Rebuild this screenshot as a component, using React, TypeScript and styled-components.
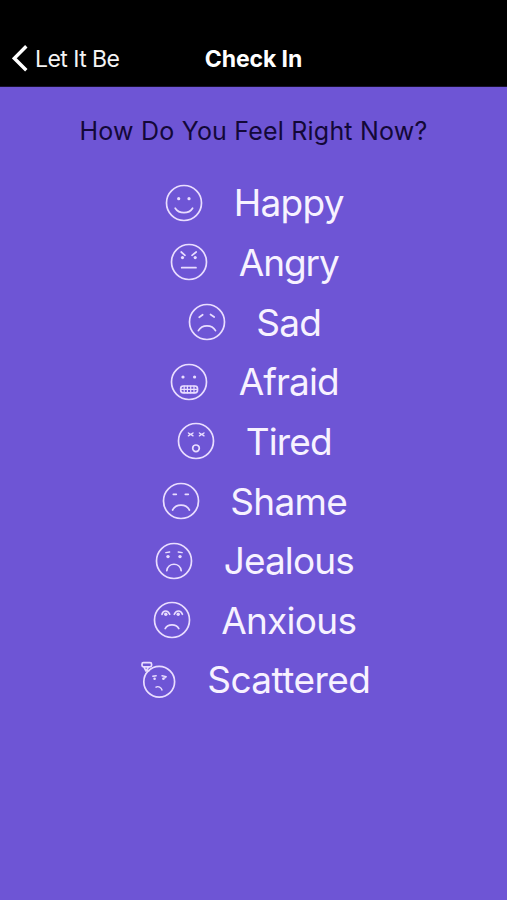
import React from "react";
import styled, { createGlobalStyle } from "styled-components";

const GlobalStyle = createGlobalStyle`
  * { box-sizing: border-box; }
  body { margin: 0; background: #6e55d5; }
`;

const Screen = styled.div`
  width: 100%;
  height: 900px;
  overflow: hidden;
  background: #6e55d5;
  font-family: Inter, "Liberation Sans", sans-serif;
  color: #f7f2ff;
`;

const NavBar = styled.header`
  height: 87px;
  padding: 31px 12px 0;
  display: grid;
  grid-template-columns: 1fr auto 1fr;
  align-items: center;
  background: #000;
  border-bottom: 1px solid #17112e;
`;

const BackButton = styled.button`
  display: flex;
  align-items: center;
  gap: 7px;
  padding: 0;
  border: 0;
  background: none;
  color: #f4f4f4;
  font: 400 23px/28px Inter, sans-serif;
  letter-spacing: -0.55px;
  white-space: nowrap;
`;

const NavTitle = styled.h1`
  margin: 0;
  color: #fff;
  font-size: 23px;
  line-height: 28px;
  font-weight: 700;
  letter-spacing: -0.1px;
`;

const Question = styled.h2`
  margin: 28px 0 0;
  height: 32px;
  text-align: center;
  color: #130838;
  font-size: 25px;
  line-height: 32px;
  font-weight: 400;
  letter-spacing: 0.2px;
  white-space: nowrap;
`;

const MoodList = styled.ul`
  list-style: none;
  margin: 26px 0 0;
  padding: 0 0 0 2px;
  display: grid;
  grid-auto-rows: 59.65px;
`;

const MoodRow = styled.li`
  display: flex;
  align-items: center;
  justify-content: center;
  gap: 30.5px;
`;

const Face = styled.svg`
  flex: none;
  width: 38px;
  height: 38px;
  overflow: visible;
  fill: none;
  stroke: #e9ddff;
  stroke-width: 1.7;
  stroke-linecap: round;
  stroke-linejoin: round;
`;

const Label = styled.span<{ $tracking: number }>`
  padding-top: 1px;
  font-size: 37px;
  line-height: 46px;
  letter-spacing: ${(p) => p.$tracking}px;
  white-space: nowrap;
`;

const Dot = ({ x, y, r = 1.6 }: { x: number; y: number; r?: number }) => (
  <circle cx={x} cy={y} r={r} fill="#e9ddff" stroke="none" />
);

const Head = () => <circle r="17.5" />;

const moods: { name: string; tracking: number; face: React.ReactNode }[] = [
  {
    name: "Happy",
    tracking: -0.7,
    face: <><Head /><Dot x={-5.3} y={-4.3} /><Dot x={5} y={-4.3} /><path d="M-8.8 5.2C-5 11.2 5 11.2 8.6 5.2" /></>,
  },
  {
    name: "Angry",
    tracking: -1.1,
    face: <><Head /><path d="M-7.8-10L-4-6.7M7.2-10L3-6.7M-7.3 5.7H7" /><Dot x={-6.5} y={-4.4} /><Dot x={6.2} y={-4.4} /></>,
  },
  {
    name: "Sad",
    tracking: -0.8,
    face: <><Head /><path d="M-7.8-4.7L-4.3-7.3M3.5-7.5L7.2-5M-8.6 8.7C-5 2.3 5 2.3 8.5 8.7" /></>,
  },
  {
    name: "Afraid",
    tracking: -0.9,
    face: <><Head /><Dot x={-6} y={-5} /><Dot x={5.6} y={-5} /><rect x="-8.3" y="4" width="16.8" height="6.8" rx="2.6" /><path strokeWidth="1.2" d="M-8 7.4H8M-4.8 4V10.8M-1.6 4V10.8M1.7 4V10.8M5 4V10.8" /></>,
  },
  {
    name: "Tired",
    tracking: -0.9,
    face: <><Head /><path strokeWidth="1.4" d="M-7.6-8L-5.5-6.6L-7.6-5.2M-3-8L-5.1-6.6L-3-5.2M3.4-8L5.5-6.6L3.4-5.2M8-8L5.9-6.6L8-5.2" /><circle cy="7.3" r="3.3" /></>,
  },
  {
    name: "Shame",
    tracking: -0.7,
    face: <><Head /><path d="M-7.7-6.7H-4.7M4.3-6.7H7.3M-8.4 9C-5 2.4 5 2.4 8.4 9" /></>,
  },
  {
    name: "Jealous",
    tracking: -0.9,
    face: <><Head /><path strokeWidth="1.3" d="M-8.2-8.4L-4.3-9M4.2-9L8.2-8.4" /><Dot x={-6} y={-4.4} r={1.7} /><Dot x={6} y={-4.4} r={1.7} /><path d="M-7.2 9.7C-6 1.1 6 1.1 7.2 9.7" /></>,
  },
  {
    name: "Anxious",
    tracking: -0.7,
    face: <><Head /><path d="M-10-5.7C-9-10.1-4-10.1-2.3-5.7M2.3-5.7C4-10.1 9-10.1 10.4-5.7M-6.8 8.6C-4 3.6 4 3.6 6.8 8.6" /><Dot x={-6.2} y={-5.7} r={1.7} /><Dot x={6.2} y={-5.7} r={1.7} /></>,
  },
  {
    name: "Scattered",
    tracking: -0.55,
    face: (
      <>
        <circle cx="1.2" cy="1.8" r="15.4" />
        <path fill="#6e55d5" d="M-14.6-17.4H-8Q-6.4-17.4-6.4-15.8V-14.8Q-6.4-13.2-8-13.2H-9.3L-12-9L-9-9.4M-14.6-17.4Q-16-17.4-16-15.8V-14.8Q-16-13.2-14.6-13.2H-9.3M-14-12.8L-12-9" />
        <path strokeWidth="1.4" d="M-5.2-3.8L-1.8-4.2M4-4.2L8.2-3.4Q7.6-2 6-2M-2-3.8M-2 7.2C.2 5.7 3.4 7.4 4 10" />
        <Dot x={-3.4} y={-1.2} r={1.3} />
        <Dot x={5.4} y={-1.2} r={1.3} />
      </>
    ),
  },
];

export default function App() {
  return (
    <>
      <GlobalStyle />
      <Screen>
        <NavBar>
          <BackButton>
            <svg width="16" height="28" viewBox="0 0 16 28" fill="none" stroke="#fff" strokeWidth="3.4">
              <path d="M14.3 1.3L2.3 13.3L14.3 25.3" />
            </svg>
            Let It Be
          </BackButton>
          <NavTitle>Check In</NavTitle>
        </NavBar>
        <Question>How Do You Feel Right Now?</Question>
        <MoodList>
          {moods.map((m) => (
            <MoodRow key={m.name}>
              <Face viewBox="-19 -19 38 38">{m.face}</Face>
              <Label $tracking={m.tracking}>{m.name}</Label>
            </MoodRow>
          ))}
        </MoodList>
      </Screen>
    </>
  );
}
